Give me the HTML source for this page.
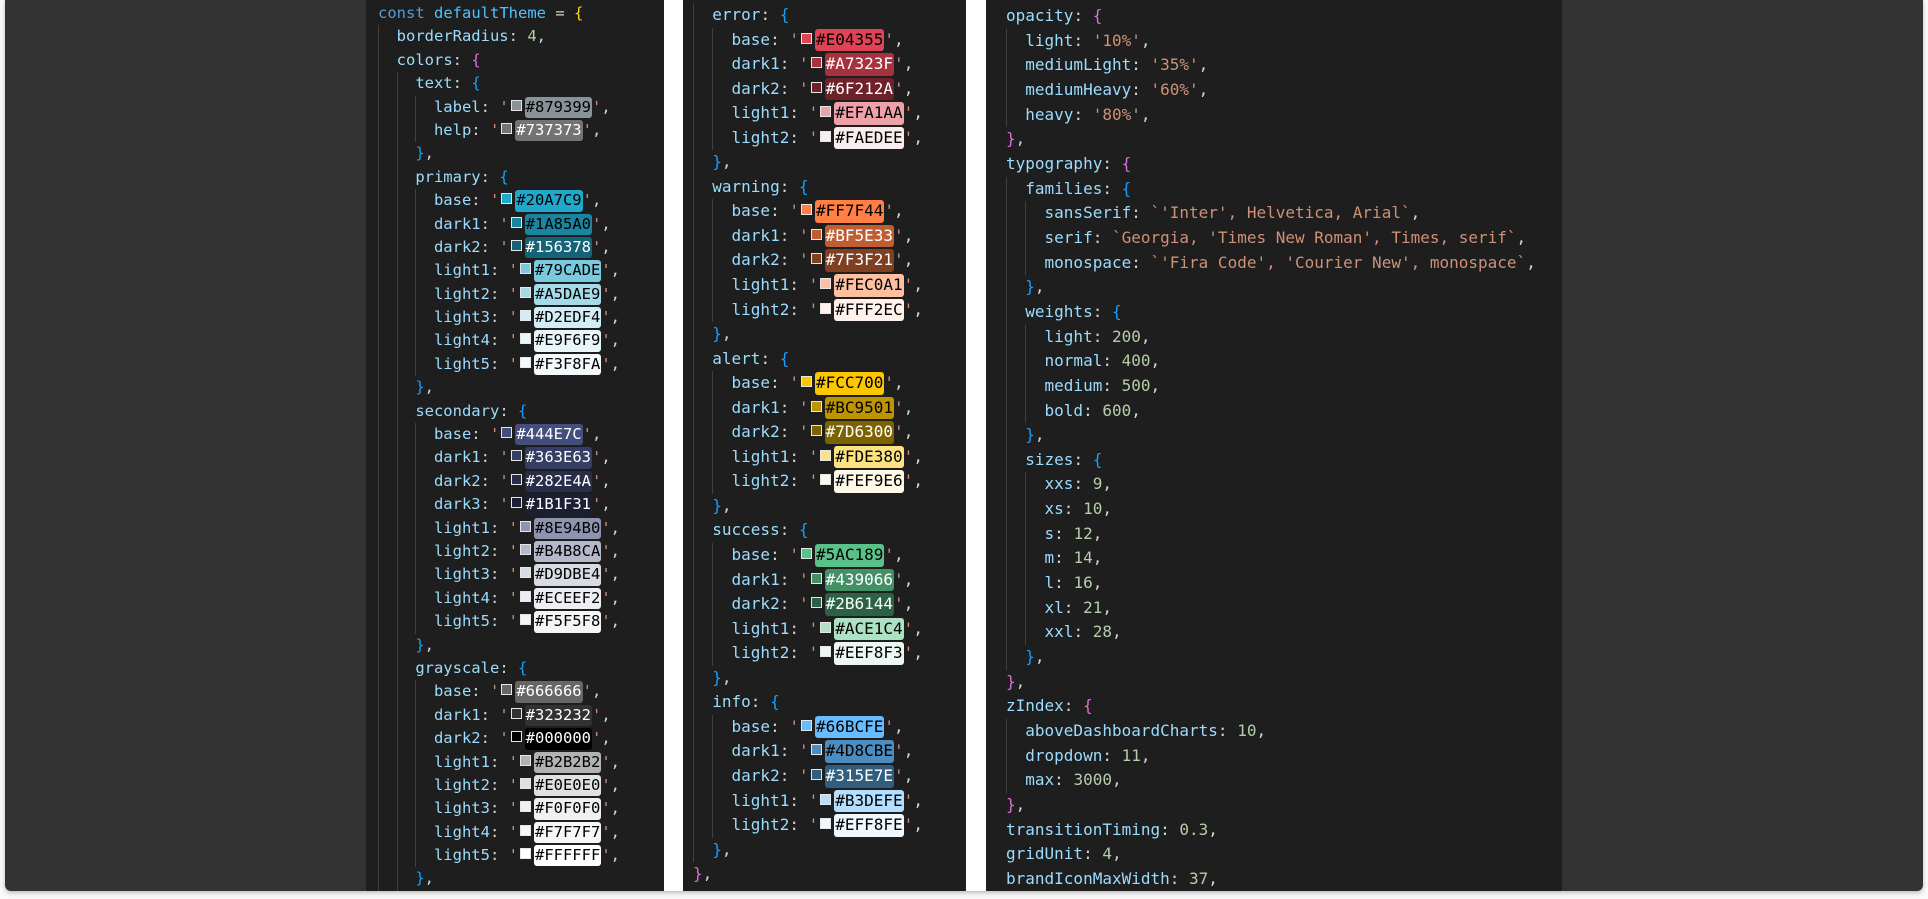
<!DOCTYPE html>
<html><head><meta charset="utf-8"><style>
*{margin:0;padding:0;box-sizing:border-box}
body{width:1928px;height:899px;background:#fafafa;position:relative;overflow:hidden}
.card{position:absolute;left:5px;top:0;width:1918px;height:891px;background:#333;border-radius:0 0 6px 6px;box-shadow:0 2px 5px rgba(0,0,0,.25)}
.gap{position:absolute;top:0;height:891px;background:#fff}
.p{position:absolute;top:0;height:891px;background:#1e1e1e;font-family:"DejaVu Sans Mono","Liberation Mono",monospace;color:#d4d4d4;overflow:hidden}
.l{height:var(--lh);line-height:var(--lh);white-space:pre}
i{display:inline-block;width:2ch;height:var(--lh);border-left:1px solid #404040;vertical-align:top}
.k{color:#9cdcfe}.n{color:#b5cea8}.s{color:#ce9178}.q{color:#ce9178}
.b1{color:#ffd700}.b2{color:#da70d6}.b3{color:#179fff}
b{display:inline-block;width:11px;height:11px;border:1.5px solid #e6e6e6;margin:0 3px 0 2px;vertical-align:middle;position:relative;top:-2px}
u{text-decoration:none;display:inline-block;border-radius:3px;padding:0 1px;vertical-align:top;margin-top:1px;height:calc(var(--lh) - 2px);line-height:calc(var(--lh) - 2px);color:#000}
u.w{color:#fff}
</style></head><body>
<div class="card"></div>
<div class="gap" style="left:664px;width:19px"></div>
<div class="gap" style="left:966px;width:20px"></div>

<div class="p" style="left:366px;width:298px;padding:2px 0 0 12px;font-size:15.5px;--lh:23.4px">
<div class="l"><span style="color:#569cd6">const</span> <span style="color:#4fc1ff">defaultTheme</span> = <span class="b1">{</span></div>
<div class="l"><i></i><span class="k">borderRadius</span>: <span class="n">4</span>,</div>
<div class="l"><i></i><span class="k">colors</span>: <span class="b2">{</span></div>
<div class="l"><i></i><i></i><span class="k">text</span>: <span class="b3">{</span></div>
<div class="l"><i></i><i></i><i></i><span class="k">label</span>: <span class="q">'</span><b style="background:#879399"></b><u style="background:#879399">#879399</u><span class="q">'</span>,</div>
<div class="l"><i></i><i></i><i></i><span class="k">help</span>: <span class="q">'</span><b style="background:#737373"></b><u class="w" style="background:#737373">#737373</u><span class="q">'</span>,</div>
<div class="l"><i></i><i></i><span class="b3">}</span>,</div>
<div class="l"><i></i><i></i><span class="k">primary</span>: <span class="b3">{</span></div>
<div class="l"><i></i><i></i><i></i><span class="k">base</span>: <span class="q">'</span><b style="background:#20A7C9"></b><u style="background:#20A7C9">#20A7C9</u><span class="q">'</span>,</div>
<div class="l"><i></i><i></i><i></i><span class="k">dark1</span>: <span class="q">'</span><b style="background:#1A85A0"></b><u style="background:#1A85A0">#1A85A0</u><span class="q">'</span>,</div>
<div class="l"><i></i><i></i><i></i><span class="k">dark2</span>: <span class="q">'</span><b style="background:#156378"></b><u class="w" style="background:#156378">#156378</u><span class="q">'</span>,</div>
<div class="l"><i></i><i></i><i></i><span class="k">light1</span>: <span class="q">'</span><b style="background:#79CADE"></b><u style="background:#79CADE">#79CADE</u><span class="q">'</span>,</div>
<div class="l"><i></i><i></i><i></i><span class="k">light2</span>: <span class="q">'</span><b style="background:#A5DAE9"></b><u style="background:#A5DAE9">#A5DAE9</u><span class="q">'</span>,</div>
<div class="l"><i></i><i></i><i></i><span class="k">light3</span>: <span class="q">'</span><b style="background:#D2EDF4"></b><u style="background:#D2EDF4">#D2EDF4</u><span class="q">'</span>,</div>
<div class="l"><i></i><i></i><i></i><span class="k">light4</span>: <span class="q">'</span><b style="background:#E9F6F9"></b><u style="background:#E9F6F9">#E9F6F9</u><span class="q">'</span>,</div>
<div class="l"><i></i><i></i><i></i><span class="k">light5</span>: <span class="q">'</span><b style="background:#F3F8FA"></b><u style="background:#F3F8FA">#F3F8FA</u><span class="q">'</span>,</div>
<div class="l"><i></i><i></i><span class="b3">}</span>,</div>
<div class="l"><i></i><i></i><span class="k">secondary</span>: <span class="b3">{</span></div>
<div class="l"><i></i><i></i><i></i><span class="k">base</span>: <span class="q">'</span><b style="background:#444E7C"></b><u class="w" style="background:#444E7C">#444E7C</u><span class="q">'</span>,</div>
<div class="l"><i></i><i></i><i></i><span class="k">dark1</span>: <span class="q">'</span><b style="background:#363E63"></b><u class="w" style="background:#363E63">#363E63</u><span class="q">'</span>,</div>
<div class="l"><i></i><i></i><i></i><span class="k">dark2</span>: <span class="q">'</span><b style="background:#282E4A"></b><u class="w" style="background:#282E4A">#282E4A</u><span class="q">'</span>,</div>
<div class="l"><i></i><i></i><i></i><span class="k">dark3</span>: <span class="q">'</span><b style="background:#1B1F31"></b><u class="w" style="background:#1B1F31">#1B1F31</u><span class="q">'</span>,</div>
<div class="l"><i></i><i></i><i></i><span class="k">light1</span>: <span class="q">'</span><b style="background:#8E94B0"></b><u style="background:#8E94B0">#8E94B0</u><span class="q">'</span>,</div>
<div class="l"><i></i><i></i><i></i><span class="k">light2</span>: <span class="q">'</span><b style="background:#B4B8CA"></b><u style="background:#B4B8CA">#B4B8CA</u><span class="q">'</span>,</div>
<div class="l"><i></i><i></i><i></i><span class="k">light3</span>: <span class="q">'</span><b style="background:#D9DBE4"></b><u style="background:#D9DBE4">#D9DBE4</u><span class="q">'</span>,</div>
<div class="l"><i></i><i></i><i></i><span class="k">light4</span>: <span class="q">'</span><b style="background:#ECEEF2"></b><u style="background:#ECEEF2">#ECEEF2</u><span class="q">'</span>,</div>
<div class="l"><i></i><i></i><i></i><span class="k">light5</span>: <span class="q">'</span><b style="background:#F5F5F8"></b><u style="background:#F5F5F8">#F5F5F8</u><span class="q">'</span>,</div>
<div class="l"><i></i><i></i><span class="b3">}</span>,</div>
<div class="l"><i></i><i></i><span class="k">grayscale</span>: <span class="b3">{</span></div>
<div class="l"><i></i><i></i><i></i><span class="k">base</span>: <span class="q">'</span><b style="background:#666666"></b><u class="w" style="background:#666666">#666666</u><span class="q">'</span>,</div>
<div class="l"><i></i><i></i><i></i><span class="k">dark1</span>: <span class="q">'</span><b style="background:#323232"></b><u class="w" style="background:#323232">#323232</u><span class="q">'</span>,</div>
<div class="l"><i></i><i></i><i></i><span class="k">dark2</span>: <span class="q">'</span><b style="background:#000000"></b><u class="w" style="background:#000000">#000000</u><span class="q">'</span>,</div>
<div class="l"><i></i><i></i><i></i><span class="k">light1</span>: <span class="q">'</span><b style="background:#B2B2B2"></b><u style="background:#B2B2B2">#B2B2B2</u><span class="q">'</span>,</div>
<div class="l"><i></i><i></i><i></i><span class="k">light2</span>: <span class="q">'</span><b style="background:#E0E0E0"></b><u style="background:#E0E0E0">#E0E0E0</u><span class="q">'</span>,</div>
<div class="l"><i></i><i></i><i></i><span class="k">light3</span>: <span class="q">'</span><b style="background:#F0F0F0"></b><u style="background:#F0F0F0">#F0F0F0</u><span class="q">'</span>,</div>
<div class="l"><i></i><i></i><i></i><span class="k">light4</span>: <span class="q">'</span><b style="background:#F7F7F7"></b><u style="background:#F7F7F7">#F7F7F7</u><span class="q">'</span>,</div>
<div class="l"><i></i><i></i><i></i><span class="k">light5</span>: <span class="q">'</span><b style="background:#FFFFFF"></b><u style="background:#FFFFFF">#FFFFFF</u><span class="q">'</span>,</div>
<div class="l"><i></i><i></i><span class="b3">}</span>,</div>
</div>

<div class="p" style="left:683px;width:283px;padding:3px 0 0 10px;font-size:16px;--lh:24.55px">
<div class="l"><i></i><span class="k">error</span>: <span class="b3">{</span></div>
<div class="l"><i></i><i></i><span class="k">base</span>: <span class="q">'</span><b style="background:#E04355"></b><u style="background:#E04355">#E04355</u><span class="q">'</span>,</div>
<div class="l"><i></i><i></i><span class="k">dark1</span>: <span class="q">'</span><b style="background:#A7323F"></b><u class="w" style="background:#A7323F">#A7323F</u><span class="q">'</span>,</div>
<div class="l"><i></i><i></i><span class="k">dark2</span>: <span class="q">'</span><b style="background:#6F212A"></b><u class="w" style="background:#6F212A">#6F212A</u><span class="q">'</span>,</div>
<div class="l"><i></i><i></i><span class="k">light1</span>: <span class="q">'</span><b style="background:#EFA1AA"></b><u style="background:#EFA1AA">#EFA1AA</u><span class="q">'</span>,</div>
<div class="l"><i></i><i></i><span class="k">light2</span>: <span class="q">'</span><b style="background:#FAEDEE"></b><u style="background:#FAEDEE">#FAEDEE</u><span class="q">'</span>,</div>
<div class="l"><i></i><span class="b3">}</span>,</div>
<div class="l"><i></i><span class="k">warning</span>: <span class="b3">{</span></div>
<div class="l"><i></i><i></i><span class="k">base</span>: <span class="q">'</span><b style="background:#FF7F44"></b><u style="background:#FF7F44">#FF7F44</u><span class="q">'</span>,</div>
<div class="l"><i></i><i></i><span class="k">dark1</span>: <span class="q">'</span><b style="background:#BF5E33"></b><u class="w" style="background:#BF5E33">#BF5E33</u><span class="q">'</span>,</div>
<div class="l"><i></i><i></i><span class="k">dark2</span>: <span class="q">'</span><b style="background:#7F3F21"></b><u class="w" style="background:#7F3F21">#7F3F21</u><span class="q">'</span>,</div>
<div class="l"><i></i><i></i><span class="k">light1</span>: <span class="q">'</span><b style="background:#FEC0A1"></b><u style="background:#FEC0A1">#FEC0A1</u><span class="q">'</span>,</div>
<div class="l"><i></i><i></i><span class="k">light2</span>: <span class="q">'</span><b style="background:#FFF2EC"></b><u style="background:#FFF2EC">#FFF2EC</u><span class="q">'</span>,</div>
<div class="l"><i></i><span class="b3">}</span>,</div>
<div class="l"><i></i><span class="k">alert</span>: <span class="b3">{</span></div>
<div class="l"><i></i><i></i><span class="k">base</span>: <span class="q">'</span><b style="background:#FCC700"></b><u style="background:#FCC700">#FCC700</u><span class="q">'</span>,</div>
<div class="l"><i></i><i></i><span class="k">dark1</span>: <span class="q">'</span><b style="background:#BC9501"></b><u style="background:#BC9501">#BC9501</u><span class="q">'</span>,</div>
<div class="l"><i></i><i></i><span class="k">dark2</span>: <span class="q">'</span><b style="background:#7D6300"></b><u class="w" style="background:#7D6300">#7D6300</u><span class="q">'</span>,</div>
<div class="l"><i></i><i></i><span class="k">light1</span>: <span class="q">'</span><b style="background:#FDE380"></b><u style="background:#FDE380">#FDE380</u><span class="q">'</span>,</div>
<div class="l"><i></i><i></i><span class="k">light2</span>: <span class="q">'</span><b style="background:#FEF9E6"></b><u style="background:#FEF9E6">#FEF9E6</u><span class="q">'</span>,</div>
<div class="l"><i></i><span class="b3">}</span>,</div>
<div class="l"><i></i><span class="k">success</span>: <span class="b3">{</span></div>
<div class="l"><i></i><i></i><span class="k">base</span>: <span class="q">'</span><b style="background:#5AC189"></b><u style="background:#5AC189">#5AC189</u><span class="q">'</span>,</div>
<div class="l"><i></i><i></i><span class="k">dark1</span>: <span class="q">'</span><b style="background:#439066"></b><u class="w" style="background:#439066">#439066</u><span class="q">'</span>,</div>
<div class="l"><i></i><i></i><span class="k">dark2</span>: <span class="q">'</span><b style="background:#2B6144"></b><u class="w" style="background:#2B6144">#2B6144</u><span class="q">'</span>,</div>
<div class="l"><i></i><i></i><span class="k">light1</span>: <span class="q">'</span><b style="background:#ACE1C4"></b><u style="background:#ACE1C4">#ACE1C4</u><span class="q">'</span>,</div>
<div class="l"><i></i><i></i><span class="k">light2</span>: <span class="q">'</span><b style="background:#EEF8F3"></b><u style="background:#EEF8F3">#EEF8F3</u><span class="q">'</span>,</div>
<div class="l"><i></i><span class="b3">}</span>,</div>
<div class="l"><i></i><span class="k">info</span>: <span class="b3">{</span></div>
<div class="l"><i></i><i></i><span class="k">base</span>: <span class="q">'</span><b style="background:#66BCFE"></b><u style="background:#66BCFE">#66BCFE</u><span class="q">'</span>,</div>
<div class="l"><i></i><i></i><span class="k">dark1</span>: <span class="q">'</span><b style="background:#4D8CBE"></b><u style="background:#4D8CBE">#4D8CBE</u><span class="q">'</span>,</div>
<div class="l"><i></i><i></i><span class="k">dark2</span>: <span class="q">'</span><b style="background:#315E7E"></b><u class="w" style="background:#315E7E">#315E7E</u><span class="q">'</span>,</div>
<div class="l"><i></i><i></i><span class="k">light1</span>: <span class="q">'</span><b style="background:#B3DEFE"></b><u style="background:#B3DEFE">#B3DEFE</u><span class="q">'</span>,</div>
<div class="l"><i></i><i></i><span class="k">light2</span>: <span class="q">'</span><b style="background:#EFF8FE"></b><u style="background:#EFF8FE">#EFF8FE</u><span class="q">'</span>,</div>
<div class="l"><i></i><span class="b3">}</span>,</div>
<div class="l"><span class="b2">}</span>,</div>
</div>

<div class="p" style="left:986px;width:576px;padding:4px 0 0 20px;font-size:16px;--lh:24.66px">
<div class="l"><span class="k">opacity</span>: <span class="b2">{</span></div>
<div class="l"><i></i><span class="k">light</span>: <span class="s">'10%'</span>,</div>
<div class="l"><i></i><span class="k">mediumLight</span>: <span class="s">'35%'</span>,</div>
<div class="l"><i></i><span class="k">mediumHeavy</span>: <span class="s">'60%'</span>,</div>
<div class="l"><i></i><span class="k">heavy</span>: <span class="s">'80%'</span>,</div>
<div class="l"><span class="b2">}</span>,</div>
<div class="l"><span class="k">typography</span>: <span class="b2">{</span></div>
<div class="l"><i></i><span class="k">families</span>: <span class="b3">{</span></div>
<div class="l"><i></i><i></i><span class="k">sansSerif</span>: <span class="s">`'Inter', Helvetica, Arial`</span>,</div>
<div class="l"><i></i><i></i><span class="k">serif</span>: <span class="s">`Georgia, 'Times New Roman', Times, serif`</span>,</div>
<div class="l"><i></i><i></i><span class="k">monospace</span>: <span class="s">`'Fira Code', 'Courier New', monospace`</span>,</div>
<div class="l"><i></i><span class="b3">}</span>,</div>
<div class="l"><i></i><span class="k">weights</span>: <span class="b3">{</span></div>
<div class="l"><i></i><i></i><span class="k">light</span>: <span class="n">200</span>,</div>
<div class="l"><i></i><i></i><span class="k">normal</span>: <span class="n">400</span>,</div>
<div class="l"><i></i><i></i><span class="k">medium</span>: <span class="n">500</span>,</div>
<div class="l"><i></i><i></i><span class="k">bold</span>: <span class="n">600</span>,</div>
<div class="l"><i></i><span class="b3">}</span>,</div>
<div class="l"><i></i><span class="k">sizes</span>: <span class="b3">{</span></div>
<div class="l"><i></i><i></i><span class="k">xxs</span>: <span class="n">9</span>,</div>
<div class="l"><i></i><i></i><span class="k">xs</span>: <span class="n">10</span>,</div>
<div class="l"><i></i><i></i><span class="k">s</span>: <span class="n">12</span>,</div>
<div class="l"><i></i><i></i><span class="k">m</span>: <span class="n">14</span>,</div>
<div class="l"><i></i><i></i><span class="k">l</span>: <span class="n">16</span>,</div>
<div class="l"><i></i><i></i><span class="k">xl</span>: <span class="n">21</span>,</div>
<div class="l"><i></i><i></i><span class="k">xxl</span>: <span class="n">28</span>,</div>
<div class="l"><i></i><span class="b3">}</span>,</div>
<div class="l"><span class="b2">}</span>,</div>
<div class="l"><span class="k">zIndex</span>: <span class="b2">{</span></div>
<div class="l"><i></i><span class="k">aboveDashboardCharts</span>: <span class="n">10</span>,</div>
<div class="l"><i></i><span class="k">dropdown</span>: <span class="n">11</span>,</div>
<div class="l"><i></i><span class="k">max</span>: <span class="n">3000</span>,</div>
<div class="l"><span class="b2">}</span>,</div>
<div class="l"><span class="k">transitionTiming</span>: <span class="n">0.3</span>,</div>
<div class="l"><span class="k">gridUnit</span>: <span class="n">4</span>,</div>
<div class="l"><span class="k">brandIconMaxWidth</span>: <span class="n">37</span>,</div>
</div>
</body></html>
